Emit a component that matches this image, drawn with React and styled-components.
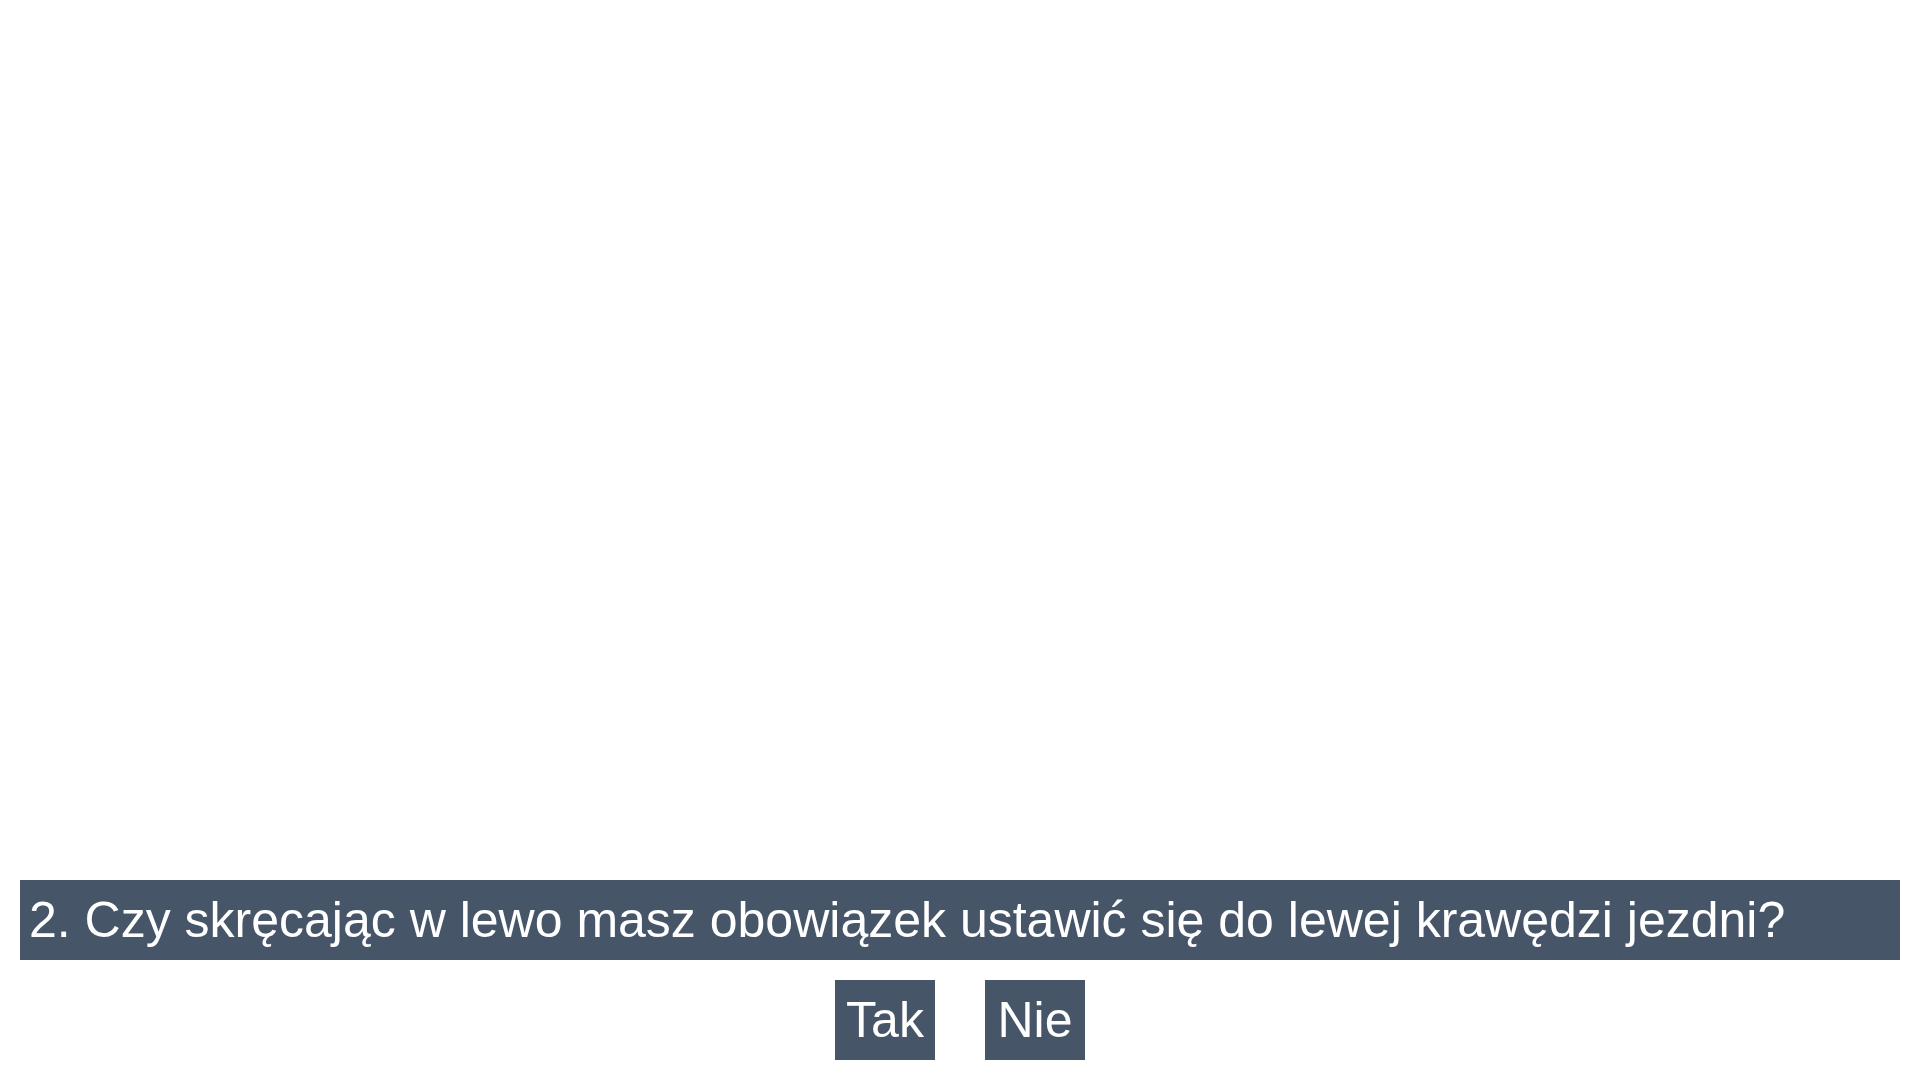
import React from 'react';
import styled, { createGlobalStyle } from 'styled-components';

const GlobalStyle = createGlobalStyle`
  html, body {
    margin: 0;
    padding: 0;
    background: #ffffff;
    font-family: "Liberation Sans", Arial, sans-serif;
  }
`;

const Page = styled.div`
  display: flex;
  flex-direction: column;
  justify-content: flex-end;
  gap: 20px;
  height: 1080px;
  padding: 0 20px 20px 20px;
  box-sizing: border-box;
`;

const Question = styled.div`
  height: 80px;
  line-height: 80px;
  padding-left: 9px;
  background-color: #475569;
  color: #ffffff;
  font-size: 50px;
  white-space: nowrap;
`;

const Answers = styled.div`
  display: flex;
  justify-content: center;
  gap: 50px;
`;

const AnswerButton = styled.button`
  width: 100px;
  height: 80px;
  padding: 0;
  border: none;
  background-color: #475569;
  color: #ffffff;
  font-family: "Liberation Sans", Arial, sans-serif;
  font-size: 50px;
  line-height: 80px;
  cursor: pointer;
`;

export default function App() {
  return (
    <>
      <GlobalStyle />
      <Page>
        <Question>2. Czy skręcając w lewo masz obowiązek ustawić się do lewej krawędzi jezdni?</Question>
        <Answers>
          <AnswerButton>Tak</AnswerButton>
          <AnswerButton>Nie</AnswerButton>
        </Answers>
      </Page>
    </>
  );
}
